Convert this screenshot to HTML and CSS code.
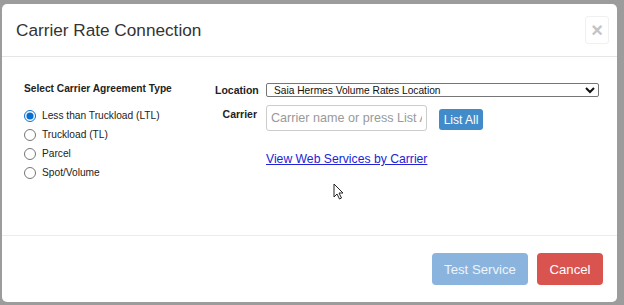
FILE: index.html
```html
<!DOCTYPE html>
<html lang="en">
<head>
<meta charset="UTF-8">
<title>Carrier Rate Connection</title>
<link rel="stylesheet" href="styles.css">
</head>
<body>

<div class="modal">
    <div class="modal-header">
        <h4 class="modal-title">Carrier Rate Connection</h4>
        <button class="close" type="button">&times;</button>
    </div>

    <div class="modal-body">
        <div class="col-type">
            <p class="section-label">Select Carrier Agreement Type</p>
            <label class="radio"><input type="radio" name="type" checked> Less than Truckload (LTL)</label>
            <label class="radio"><input type="radio" name="type"> Truckload (TL)</label>
            <label class="radio"><input type="radio" name="type"> Parcel</label>
            <label class="radio"><input type="radio" name="type"> Spot/Volume</label>
        </div>

        <div class="col-form">
            <div class="form-row">
                <span class="field-label">Location</span>
                <select class="location">
                    <option>Saia Hermes Volume Rates Location</option>
                </select>
            </div>
            <div class="form-row carrier-row">
                <span class="field-label">Carrier</span>
                <input type="text" class="carrier" placeholder="Carrier name or press List All">
                <button class="btn btn-primary btn-small">List All</button>
            </div>
            <a class="ws-link" href="#">View Web Services by Carrier</a>
        </div>

        <svg class="cursor" width="12" height="18" viewBox="0 0 12 18">
            <path d="M1 1 L1 14 L4 11 L6.5 16 L8.5 15 L6 10 L10 10 Z" fill="#fff" stroke="#222" stroke-width="1"/>
        </svg>
    </div>

    <div class="modal-footer">
        <button class="btn btn-primary btn-disabled">Test Service</button>
        <button class="btn btn-danger">Cancel</button>
    </div>
</div>

</body>
</html>
```

FILE: styles.css
```css
body {
    margin: 0;
    background: #9c9c9c;
    font-family: "Liberation Sans", Arial, sans-serif;
    color: #333;
    height: 305px;
    overflow: hidden;
}
.modal {
    position: relative;
    margin: 4px 0 0 2px;
    width: 615px;
    height: 298px;
    background: #fff;
    border-radius: 5px;
    display: flex;
    flex-direction: column;
}
.modal-header {
    height: 52px;
    padding: 0 8px 0 14px;
    border-bottom: 1px solid #e5e5e5;
    display: flex;
    align-items: center;
    justify-content: space-between;
}
.modal-title {
    margin: 1px 0 0;
    font-size: 17.2px;
    font-weight: normal;
    color: #333;
}
.close {
    width: 24px;
    height: 28px;
    padding: 0;
    border: 1px solid #f0f0f0;
    border-radius: 3px;
    background: #fff;
    color: #c4c4c4;
    font-size: 20px;
    font-weight: bold;
    line-height: 1;
}
.modal-body {
    flex: 1;
    position: relative;
    display: flex;
    padding: 26px 0 0 22px;
    border-bottom: 1px solid #ececec;
}
.col-type {
    width: 191px;
    display: flex;
    flex-direction: column;
}
.section-label {
    margin: 0 0 12px;
    font-size: 10.2px;
    font-weight: bold;
    color: #222;
}
.radio {
    display: flex;
    align-items: center;
    height: 19px;
    font-size: 10.2px;
    color: #222;
}
.radio input {
    width: 12px;
    height: 12px;
    margin: 0 6px 0 0;
    accent-color: #0a6ed1;
}
.col-form {
    display: flex;
    flex-direction: column;
}
.form-row {
    display: flex;
    align-items: center;
}
.field-label {
    width: 42px;
    margin-right: 9px;
    text-align: right;
    font-size: 10.5px;
    font-weight: bold;
    color: #222;
}
.location {
    width: 333px;
    height: 14px;
    padding: 0 0 0 3px;
    border: 1px solid #767676;
    border-radius: 2px;
    font-family: inherit;
    font-size: 10.2px;
    color: #111;
    background: #fff;
}
.carrier-row {
    margin-top: 8px;
    align-items: flex-start;
}
.carrier-row .field-label {
    margin-top: 3px;
}
.carrier {
    width: 161px;
    height: 26px;
    box-sizing: border-box;
    padding: 0 4px;
    border: 1px solid #ccc;
    border-radius: 3px;
    font-family: inherit;
    font-size: 12.6px;
}
.carrier::placeholder {
    color: #999;
}
.btn {
    border: none;
    border-radius: 4px;
    color: #fff;
    font-family: inherit;
    white-space: nowrap;
    cursor: pointer;
}
.btn-primary {
    background: #428bca;
}
.btn-small {
    margin: 4px 0 0 12px;
    width: 44px;
    height: 21px;
    padding: 0;
    border-radius: 3px;
    font-size: 12px;
}
.ws-link {
    margin: 21px 0 0 51px;
    font-size: 12.2px;
    color: #2323d6;
}
.cursor {
    position: absolute;
    left: 331px;
    top: 126px;
}
.modal-footer {
    height: 66px;
    padding: 0 14px 0 0;
    display: flex;
    justify-content: flex-end;
    align-items: flex-start;
    gap: 9px;
}
.modal-footer .btn {
    margin-top: 17px;
    height: 32px;
    padding: 0;
    font-size: 13.2px;
}
.btn-disabled {
    background: #8ab4de;
    color: #eef4fa;
    width: 96px;
}
.btn-danger {
    background: #d9534f;
    width: 66px;
}
```
